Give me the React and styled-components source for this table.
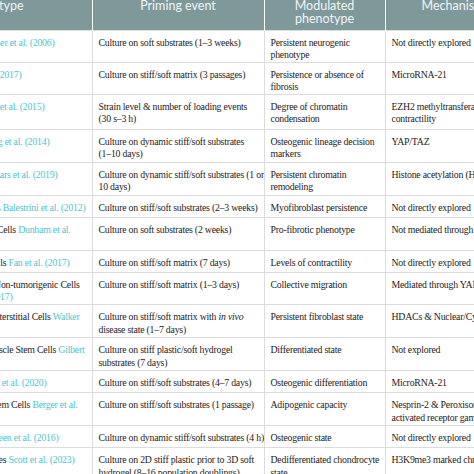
import React from "react";
import styled, { createGlobalStyle } from "styled-components";

const GlobalStyle = createGlobalStyle`
  html, body {
    margin: 0;
    padding: 0;
    background: #fff;
    overflow: hidden;
  }
`;

const Frame = styled.div`
  width: 474px;
  height: 474px;
  overflow: hidden;
`;

const Table = styled.table`
  border-collapse: collapse;
  table-layout: fixed;
  width: 521px;
`;

const Col = styled.col`
  width: ${(p) => p.$w}px;
`;

const HeadRow = styled.tr`
  height: 30px;
  background: #7f999b;
`;

const Th = styled.th`
  padding: 0 4px;
  vertical-align: top;
  text-align: center;
  font-family: Lato, "Open Sans", sans-serif;
  font-weight: 400;
  font-size: 12.5px;
  line-height: 12.5px;
  color: #f1f5f5;
  border-right: 1px solid rgba(255, 255, 255, 0.28);
  overflow: hidden;
  white-space: nowrap;
`;

const Row = styled.tr`
  height: ${(p) => p.$h}px;
`;

const Td = styled.td`
  padding: 6px 6px 0;
  vertical-align: top;
  font-family: "Liberation Serif", "Times New Roman", serif;
  font-size: 9.8px;
  letter-spacing: -0.22px;
  line-height: 12.6px;
  color: #1e1b1c;
  border: 1px solid #dcdcdc;
  overflow: hidden;
  white-space: nowrap;
`;

const RefCell = styled(Td)`
  padding: 6px 0 0;
  border-left: none;
`;

const RefLine = styled.div`
  display: flex;
  justify-content: flex-end;
  padding-right: ${(p) => p.$pr}px;
  white-space: nowrap;
`;

const Cite = styled.span`
  color: #4fc3cf;
`;

const rows = [
  {
    h: 32,
    ref: [{ end: 55, text: "", cite: "Kaiser et al. (2006)" }],
    prime: ["Culture on soft substrates (1–3 weeks)"],
    pheno: ["Persistent neurogenic", "phenotype"],
    mech: ["Not directly explored"],
  },
  {
    h: 32,
    ref: [{ end: 22, text: "", cite: "(2017)" }],
    prime: ["Culture on stiff/soft matrix (3 passages)"],
    pheno: ["Persistence or absence of", "fibrosis"],
    mech: ["MicroRNA-21"],
  },
  {
    h: 35,
    ref: [{ end: 45, text: "", cite: "Le et al. (2015)" }],
    prime: ["Strain level & number of loading events", "(30 s–3 h)"],
    pheno: ["Degree of chromatin", "condensation"],
    mech: ["EZH2 methyltransferase and", "contractility"],
  },
  {
    h: 33,
    ref: [{ end: 50, text: "", cite: "Yang et al. (2014)" }],
    prime: ["Culture on dynamic stiff/soft substrates", "(1–10 days)"],
    pheno: ["Osteogenic lineage decision", "markers"],
    mech: ["YAP/TAZ"],
  },
  {
    h: 33,
    ref: [{ end: 58, text: "", cite: "Killaars et al. (2019)" }],
    prime: ["Culture on dynamic stiff/soft substrates (1 or", "10 days)"],
    pheno: ["Persistent chromatin", "remodeling"],
    mech: ["Histone acetylation (HDACs)"],
  },
  {
    h: 22,
    ref: [{ end: 86, text: "Cells ", cite: "Balestrini et al. (2012)" }],
    prime: ["Culture on stiff/soft substrates (2–3 weeks)"],
    pheno: ["Myofibroblast persistence"],
    mech: ["Not directly explored"],
  },
  {
    h: 33,
    ref: [{ end: 71, text: "Fibroblast Cells ", cite: "Dunham et al." }],
    prime: ["Culture on soft substrates (2 weeks)"],
    pheno: ["Pro-fibrotic phenotype"],
    mech: ["Not mediated through YAP"],
  },
  {
    h: 22,
    ref: [{ end: 70, text: "Cells ", cite: "Fan et al. (2017)" }],
    prime: ["Culture on stiff/soft matrix (7 days)"],
    pheno: ["Levels of contractility"],
    mech: ["Not directly explored"],
  },
  {
    h: 32,
    ref: [
      { end: 80, text: "Non-tumorigenic Cells", cite: "" },
      { end: 13, text: "", cite: "(2017)" },
    ],
    prime: ["Culture on stiff/soft matrix (1–3 days)"],
    pheno: ["Collective migration"],
    mech: ["Mediated through YAP/TAZ"],
  },
  {
    h: 33,
    ref: [{ end: 80, text: "Interstitial Cells ", cite: "Walker" }],
    prime: [
      <>
        Culture on stiff/soft matrix with <i>in vivo</i>
      </>,
      "disease state (1–7 days)",
    ],
    pheno: ["Persistent fibroblast state"],
    mech: ["HDACs & Nuclear/Cytoplasmic"],
  },
  {
    h: 33,
    ref: [{ end: 85, text: "Muscle Stem Cells ", cite: "Gilbert" }],
    prime: ["Culture on stiff plastic/soft hydrogel", "substrates (7 days)"],
    pheno: ["Differentiated state"],
    mech: ["Not explored"],
  },
  {
    h: 22,
    ref: [{ end: 47, text: "", cite: "Wang et al. (2020)" }],
    prime: ["Culture on stiff/soft substrates (4–7 days)"],
    pheno: ["Osteogenic differentiation"],
    mech: ["MicroRNA-21"],
  },
  {
    h: 33,
    ref: [{ end: 78, text: "Stem Cells ", cite: "Berger et al." }],
    prime: ["Culture on stiff/soft substrates (1 passage)"],
    pheno: ["Adipogenic capacity"],
    mech: ["Nesprin-2 & Peroxisome proliferator-", "activated receptor gamma"],
  },
  {
    h: 22,
    ref: [{ end: 59, text: "", cite: "Green et al. (2016)" }],
    prime: ["Culture on dynamic stiff/soft substrates (4 h)"],
    pheno: ["Osteogenic state"],
    mech: ["Not directly explored"],
  },
  {
    h: 36,
    ref: [{ end: 75, text: "Chondrocytes ", cite: "Scott et al. (2023)" }],
    prime: [
      "Culture on 2D stiff plastic prior to 3D soft",
      "hydrogel (8–16 population doublings)",
    ],
    pheno: ["Dedifferentiated chondrocyte", "state"],
    mech: ["H3K9me3 marked chromatin"],
  },
];

function Lines({ items }) {
  return items.map((line, i) => <div key={i}>{line}</div>);
}

export default function App() {
  return (
    <>
      <GlobalStyle />
      <Frame>
        <Table>
          <colgroup>
            <Col $w={92} />
            <Col $w={172} />
            <Col $w={121} />
            <Col $w={136} />
          </colgroup>
          <thead>
            <HeadRow>
              <Th>
                <RefLine $pr={64}>Cell type</RefLine>
              </Th>
              <Th>Priming event</Th>
              <Th>
                Modulated
                <br />
                phenotype
              </Th>
              <Th>Mechanism</Th>
            </HeadRow>
          </thead>
          <tbody>
            {rows.map((row, i) => (
              <Row key={i} $h={row.h}>
                <RefCell>
                  {row.ref.map((r, j) => (
                    <RefLine key={j} $pr={92 - r.end}>
                      <span>
                        {r.text}
                        {r.cite && <Cite>{r.cite}</Cite>}
                      </span>
                    </RefLine>
                  ))}
                </RefCell>
                <Td>
                  <Lines items={row.prime} />
                </Td>
                <Td>
                  <Lines items={row.pheno} />
                </Td>
                <Td>
                  <Lines items={row.mech} />
                </Td>
              </Row>
            ))}
          </tbody>
        </Table>
      </Frame>
    </>
  );
}
